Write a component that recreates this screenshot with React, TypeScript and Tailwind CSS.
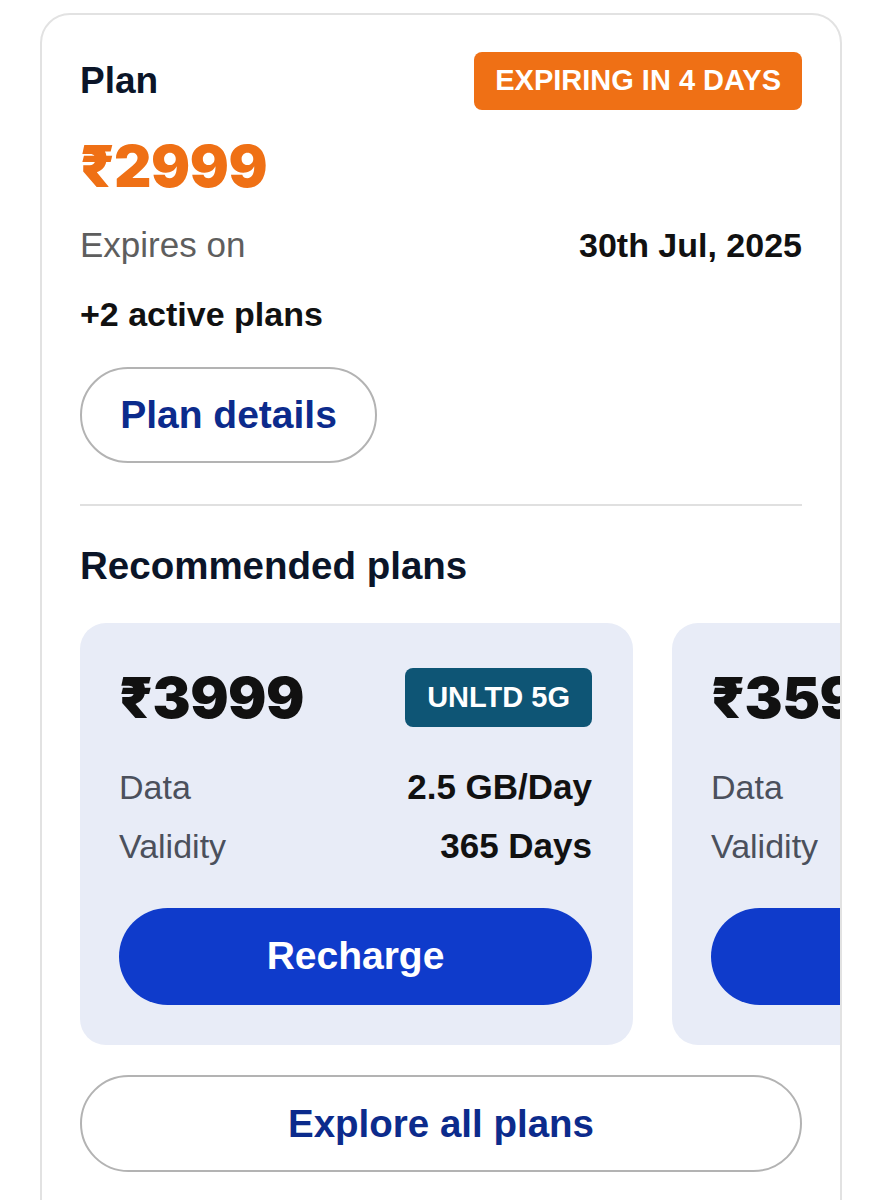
import React from "react";

const sans = { fontFamily: '"Liberation Sans", Arial, sans-serif' };
const heavy = { fontFamily: 'Inter, "DejaVu Sans", sans-serif' };

type RecPlan = { price: string; tag: string; data: string; validity: string };

const plans: RecPlan[] = [
  { price: "₹3999", tag: "UNLTD 5G", data: "2.5 GB/Day", validity: "365 Days" },
  { price: "₹3599", tag: "UNLTD 5G", data: "2.5 GB/Day", validity: "365 Days" },
];

function PlanCard({ plan }: { plan: RecPlan }) {
  return (
    <div className="w-[553px] shrink-0 rounded-[26px] bg-[#e8ecf7] pl-[39px] pr-[41px] pt-[45px] pb-[40px]">
      <div className="flex h-[59px] items-center justify-between">
        <div style={heavy} className="text-[57px] leading-[60px] font-black tracking-[-0.5px] text-[#111111]">
          {plan.price}
        </div>
        <div className="flex h-[59px] items-center rounded-[8px] bg-[#0e5575] px-[22px] text-[29px] font-bold text-white">
          {plan.tag}
        </div>
      </div>
      <div className="mt-[42px] flex items-center justify-between text-[34px] leading-[36px]">
        <span className="text-[#4b505c]">Data</span>
        <span className="text-[35px] font-bold text-[#111111]">{plan.data}</span>
      </div>
      <div className="mt-[23px] flex items-center justify-between text-[34px] leading-[36px]">
        <span className="text-[#4b505c]">Validity</span>
        <span className="text-[35px] font-bold text-[#111111]">{plan.validity}</span>
      </div>
      <button className="mt-[44px] flex h-[97px] w-full items-center justify-center rounded-full bg-[#0f3bcb] text-[39px] font-bold text-white">
        Recharge
      </button>
    </div>
  );
}

export default function App() {
  return (
    <div style={sans} className="min-h-[1200px] bg-white pt-[13px] pl-[40px]">
      <div className="h-[1300px] w-[802px] overflow-hidden rounded-[30px] border-2 border-[#e2e2e2] bg-white px-[38px] pt-[37px]">
        <div className="flex h-[58px] items-center justify-between">
          <div className="text-[37px] font-bold text-[#0b1528]">Plan</div>
          <div className="flex h-[58px] items-center rounded-[8px] bg-[#ef7015] px-[21px] text-[29px] font-bold text-white">
            EXPIRING IN 4 DAYS
          </div>
        </div>

        <div style={heavy} className="mt-[26px] text-[58px] leading-[60px] font-black tracking-[-0.5px] text-[#ef7015]">
          ₹2999
        </div>

        <div className="mt-[31px] flex items-center justify-between text-[34px] leading-[36px]">
          <span className="text-[35px] text-[#5e5e5e]">Expires on</span>
          <span className="font-bold text-[#111111]">30th Jul, 2025</span>
        </div>

        <div className="mt-[33px] text-[34px] leading-[36px] font-bold text-[#111111]">+2 active plans</div>

        <button className="mt-[35px] flex h-[96px] w-[297px] items-center justify-center rounded-full border-2 border-[#b3b3b3] text-[39px] font-bold text-[#0c2b8c]">
          Plan details
        </button>

        <div className="mt-[41px] h-[2px] bg-[#e0e0e0]" />

        <div className="mt-[40px] text-[38.5px] leading-[40px] font-bold text-[#0b1528]">Recommended plans</div>

        <div className="-mr-[38px] mt-[37px] flex gap-[39px] overflow-hidden">
          {plans.map((p, i) => (
            <PlanCard key={i} plan={p} />
          ))}
        </div>

        <button className="mt-[30px] flex h-[97px] w-full items-center justify-center rounded-full border-2 border-[#b3b3b3] text-[38.5px] font-bold text-[#0c2b8c]">
          Explore all plans
        </button>
      </div>
    </div>
  );
}
